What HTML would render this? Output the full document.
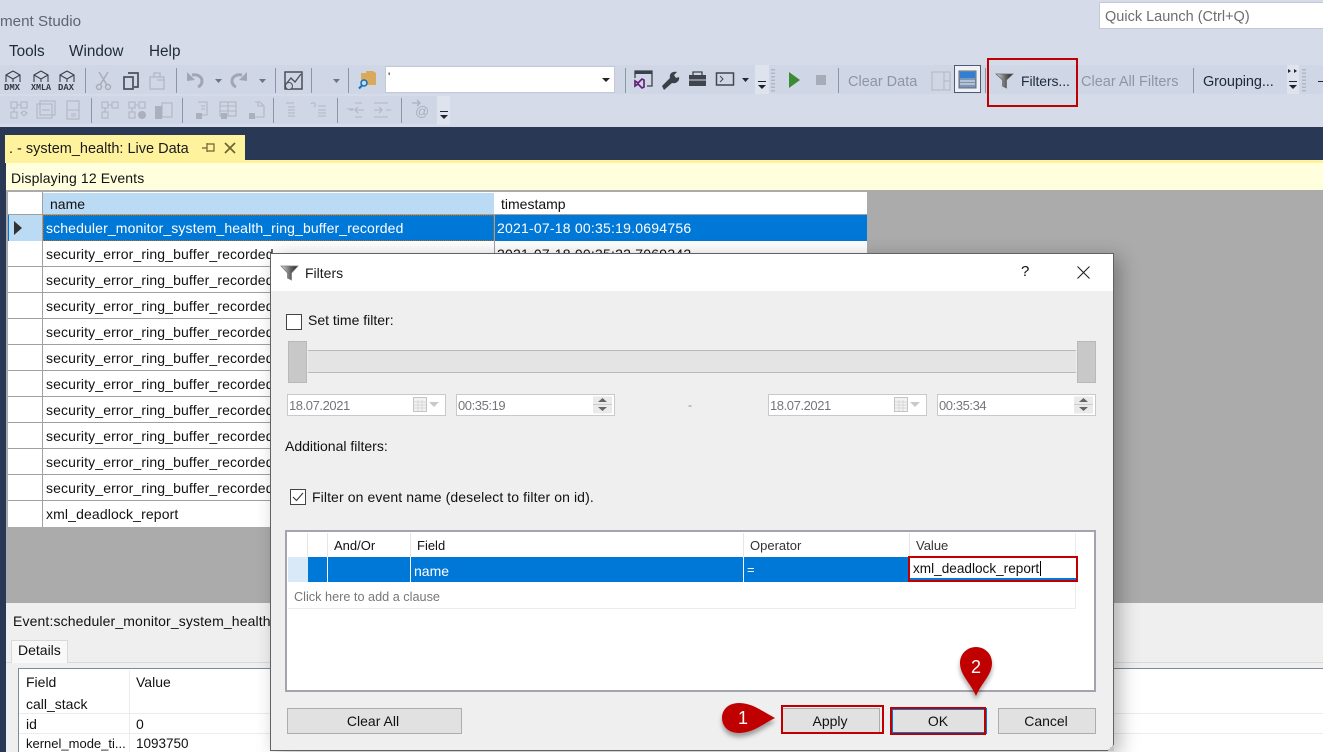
<!DOCTYPE html>
<html><head><meta charset="utf-8"><title>Filters</title>
<style>
html,body{margin:0;padding:0;width:1323px;height:752px;overflow:hidden;background:#293955}
body{position:relative;font-family:"Liberation Sans",sans-serif;font-size:14px;color:#111}
.a{position:absolute;box-sizing:border-box}
.t{position:absolute;white-space:nowrap;line-height:18px;height:18px}
.g{letter-spacing:.13px}
.row{position:absolute;box-sizing:border-box;left:8px;width:859px;height:26px;background:#fff;border-bottom:1px solid #a0a0a0}
.btn{position:absolute;box-sizing:border-box;background:#e1e1e1;border:1px solid #adadad;text-align:center;font-size:14px;line-height:24px;color:#111}
.inp{position:absolute;box-sizing:border-box;height:22px;background:#fff;border:1px solid #c9c9c9;color:#74767c;font-size:13px;letter-spacing:-.42px;line-height:21px;padding-left:1px}
.red{position:absolute;box-sizing:border-box;border:2px solid #c00000}
svg{position:absolute;overflow:visible}
</style></head><body>

<div class="a" style="left:0;top:0;width:1323px;height:127px;background:#d6dbe9"></div>
<div class="t" style="left:0;top:12px;font-size:15.200px;color:#5d6675;margin-top:1px">ment Studio</div>
<div class="a" style="left:1099px;top:2px;width:224px;height:27px;background:#fff;border:1px solid #c4c9d8;border-right:0"></div>
<div class="t" style="left:1105px;top:8px;font-size:14.500px;color:#6d6d6d">Quick Launch (Ctrl+Q)</div>
<div class="t" style="left:9px;top:43px;font-size:15.300px;color:#1e2a3a">Tools</div>
<div class="t" style="left:69px;top:43px;font-size:15.300px;color:#1e2a3a">Window</div>
<div class="t" style="left:149px;top:43px;font-size:15.300px;color:#1e2a3a">Help</div>

<div class="a" style="left:0;top:65px;width:1287px;height:29px;background:#cfd6e6"></div>
<div class="a" style="left:0;top:96px;width:437px;height:28px;background:#cfd6e6"></div>
<div class="a" style="left:437px;top:96px;width:13px;height:29px;background:#dfe3ee"></div>
<div class="a" style="left:755px;top:65px;width:14px;height:29px;background:#dfe3ee"></div>
<div class="a" style="left:1287px;top:65px;width:12px;height:29px;background:#dfe3ee"></div>
<div class="a" style="left:1299px;top:65px;width:24px;height:29px;background:#cfd6e6"></div>

<!-- combo -->
<div class="a" style="left:385px;top:66px;width:230px;height:27px;background:#fff;border:1px solid #c4c9d8"></div>
<div class="t" style="left:388px;top:68px;font-size:12px;color:#222">&#39;</div>

<svg style="left:0;top:0" width="1323" height="127" viewBox="0 0 1323 127" fill="none">
<!-- separators -->
<g stroke="#8c95a5" stroke-width="1">
<path d="M85.500 68v25M176.500 68v25M275.500 68v25M311.500 68v25M348.500 68v25M625.500 68v25M838.500 68v25M985.500 68v25M1193.500 68v25"/>
<path d="M91.500 98v25M182.500 98v25M273.500 98v25M337.500 98v25M401.500 98v25"/>
</g>
<!-- cube icons -->
<g stroke="#3a3f48" stroke-width="1.100">
<path d="M13 71l7 4v7M6 82v-7l7-4M6 75l7 4 7-4M13 79v3"/>
<path d="M41 71l7 4v7M34 82v-7l7-4M34 75l7 4 7-4M41 79v3"/>
<path d="M67 71l7 4v7M60 82v-7l7-4M60 75l7 4 7-4M67 79v3"/>
</g>
<g font-family="Liberation Mono,monospace" font-size="9" font-weight="bold" fill="#33373f">
<text x="4" y="90" textLength="16" lengthAdjust="spacingAndGlyphs">DMX</text><text x="31" y="90" textLength="20" lengthAdjust="spacingAndGlyphs">XMLA</text><text x="58" y="90" textLength="16" lengthAdjust="spacingAndGlyphs">DAX</text>
</g>
<!-- cut, copy, paste -->
<g stroke="#a7adb9" stroke-width="1.500"><path d="M99 72l8 13M108 72l-8 13"/><circle cx="99" cy="87" r="2.500"/><circle cx="108" cy="87" r="2.500"/></g>
<g stroke="#4b505a" stroke-width="1.700"><path d="M128 73h10v14h-4"/><rect x="124" y="77" width="9" height="12"/></g>
<g stroke="#b2b8c4" stroke-width="1.300"><rect x="150" y="77" width="14" height="12"/><path d="M154 77v-4h6v4M157 80h7"/></g>
<!-- undo / redo -->
<g stroke="#a0a6b2" stroke-width="3"><path d="M192 75c6-1 10 2 10 6 0 3-2 5-4 6"/><path d="M242 75c-6-1-10 2-10 6 0 3 2 5 4 6"/></g>
<path d="M187 72v9l8-1zM247 72v9l-8-1z" fill="#a0a6b2"/>
<g fill="#6f7683"><path d="M215 79h7l-3.500 4zM259 79h7l-3.500 4zM333 79h7l-3.500 4z"/></g>
<!-- chart -->
<rect x="285" y="72" width="17" height="17" stroke="#4a4f58" stroke-width="1.500"/><path d="M286 84l5-6 4 4 6-8" stroke="#4a4f58" stroke-width="1.300"/><circle cx="289" cy="86" r="3.500" fill="#cfd6e6" stroke="#4a4f58"/>
<!-- folder search -->
<path d="M361 73h5v-2h7l3 2v12h-15z" fill="#d9aa5c"/><circle cx="364" cy="83" r="3" fill="#cfd6e6" stroke="#0e70c0" stroke-width="1.500"/><path d="M362 85.500l-3 3" stroke="#0e70c0" stroke-width="2"/>
<path d="M602 78h8l-4 4z" fill="#222"/>
<!-- VS window -->
<path d="M635 78v-7h17v15h-5" stroke="#3c4149" stroke-width="1.300"/><rect x="634.500" y="71" width="17" height="3" fill="#3c4149"/>
<path d="M635 81l3 2 4-4 2 1v7l-2 1-4-4-3 2z" fill="none" stroke="#68217a" stroke-width="1.700"/>
<!-- wrench -->
<path d="M662 86l8-8c-1-4 2-7 7-6l-3 3 2 3 3-1c1 4-3 7-7 6l-8 7z" fill="#3a3f48"/>
<!-- toolbox -->
<rect x="689" y="75" width="17" height="11" fill="#3f444d"/><path d="M693 75v-3h9v3" stroke="#3f444d" stroke-width="1.300"/><path d="M689 80h17" stroke="#cfd6e6"/>
<!-- console -->
<rect x="716.500" y="73" width="17" height="12" stroke="#41464f" stroke-width="1.500"/><path d="M720 76l3 3-3 3" stroke="#41464f"/>
<path d="M742 78h7l-3.500 4z" fill="#1e2a3a"/>
<!-- overflow -->
<g fill="#20242c"><rect x="758" y="81" width="8" height="1"/><path d="M758 85h8l-4 4z"/><rect x="1289" y="81" width="8" height="1"/><path d="M1289 85h8l-4 4z"/><rect x="1318" y="81" width="5" height="1"/><rect x="440" y="111" width="8" height="1"/><path d="M440 115h8l-4 4z"/></g>
<path d="M1288 69l3 2-3 2zM1294 69l3 2-3 2z" fill="#20242c"/>
<!-- grips -->
<path d="M773 69v24M1304 69v24" stroke="#b0b6c4" stroke-width="4" stroke-dasharray="1.500 2"/>
<!-- play/stop -->
<path d="M789 72l11 8-11 8z" fill="#3b8a36"/><rect x="816" y="75" width="10" height="10" fill="#a6acb8"/>
<!-- layout icons -->
<g stroke="#b8bdc8" stroke-width="1.300"><rect x="932" y="72" width="18" height="18"/><path d="M944 72v18M944 81h6"/></g>
<rect x="954.500" y="65.500" width="26" height="27" fill="#f0f1f4" stroke="#4a5a78"/>
<rect x="959" y="71" width="17" height="17" fill="#7f95b4" stroke="#5a6a80"/><rect x="960" y="72" width="15" height="6" fill="#2f7fd4"/><path d="M960 81h15M960 84h15" stroke="#e8edf4"/>
<!-- second row -->
<g stroke="#b0b6c2" stroke-width="1.100">
<rect x="11" y="102" width="6" height="6"/><rect x="21" y="102" width="6" height="6"/><rect x="11" y="112" width="6" height="6"/><path d="M17 105h4M14 108v4M21 113l3 3 3-3-3-2z"/>
<rect x="37" y="104" width="15" height="14"/><rect x="40" y="101" width="15" height="14"/><path d="M42 110h8"/>
<rect x="67" y="101" width="12" height="18"/><path d="M67 110h12M71 114h5M71 116h5"/>
<rect x="102" y="102" width="6" height="6"/><rect x="112" y="102" width="6" height="6"/><rect x="102" y="112" width="6" height="6"/><path d="M108 105h4M105 108v4"/>
<rect x="129" y="102" width="6" height="6"/><rect x="139" y="102" width="6" height="6"/><rect x="129" y="112" width="6" height="6"/><path d="M135 105h4M132 108v4"/>
<rect x="162" y="103" width="10" height="14"/>
<path d="M198 102h9v13h-9M201 106h4M201 109h4"/>
<rect x="220" y="102" width="16" height="14"/><path d="M220 106h16M228 102v14M220 111h16"/>
<path d="M255 102h5l4 4v11h-14M258 102v4h5"/>
<path d="M286 103h8M288 107h7M288 110h7M288 113h7M288 116h7"/>
<path d="M318 106h8M318 110h8M318 113h8M318 116h8M311 104c3-3 6 0 3 3"/>
<path d="M347 109h7M362 103h-7M362 117h-7M356 110h8M350 110h3M358 107l-3 3 3 3"/>
<path d="M374 103h14M374 117h14M374 110h8M386 110h5M379 107l3 3-3 3"/>
</g>
<g fill="#aab0bc"><rect x="196" y="113" width="6" height="6"/><rect x="221" y="113" width="6" height="6"/><rect x="249" y="113" width="6" height="6"/><rect x="155" y="106" width="7" height="13"/><circle cx="142" cy="115" r="4"/></g>
<path d="M412 103h8M417 100l3 3-3 3" stroke="#aab0bc" stroke-width="1.300"/>
<text x="415" y="116" font-size="14" fill="#aab0bc" font-family="Liberation Sans,sans-serif">@</text>
<!-- filter funnel -->
<defs><linearGradient id="f" x1="0" x2="1"><stop offset="0" stop-color="#ddd"/><stop offset=".55" stop-color="#666"/><stop offset="1" stop-color="#222"/></linearGradient></defs>
<path d="M996 74h17l-6.500 6v8l-4-2v-6z" fill="url(#f)" stroke="#666" stroke-width=".7"/>
</svg>

<div class="t" style="left:848px;top:73px;font-size:14.500px;color:#8f96a3">Clear Data</div>
<div class="t" style="left:1021px;top:72px;font-size:14px;letter-spacing:-.1px;color:#1e2a3a">Filters...</div>
<div class="t" style="left:1081px;top:73px;font-size:14.500px;color:#8f96a3">Clear All Filters</div>
<div class="t" style="left:1203px;top:73px;font-size:14.500px;letter-spacing:-.1px;color:#1e2a3a">Grouping...</div>
<div class="red" style="left:987px;top:58px;width:91px;height:49px"></div>

<!-- Doc tab -->
<div class="a" style="left:5px;top:135px;width:240px;height:27px;background:#fff29d"></div>
<div class="t" style="left:9px;top:140px;font-size:14.500px;color:#1b1b1b">. - system_health: Live Data</div>
<svg style="left:200px;top:140px" width="45" height="16" fill="none" stroke="#6b6334" stroke-width="1.200"><path d="M2 8h5M7 4h7v7H7zM7 3v9"/><path d="M25 3l10 10M35 3L25 13" stroke-width="1.700"/></svg>

<div class="a" style="left:5px;top:160px;width:1318px;height:3px;background:#fff29d"></div>
<div class="a" style="left:6px;top:163px;width:1317px;height:27px;background:#ffffdd"></div>
<div class="t g" style="left:11px;top:169px">Displaying 12 Events</div>

<!-- Grid -->
<div class="a" style="left:6px;top:190px;width:1317px;height:413px;background:#ababab"></div>
<div class="a" style="left:8px;top:192px;width:859px;height:335px;background:#fff"></div>
<div class="a" style="left:43px;top:193px;width:451px;height:21px;background:#bbdaf3"></div>
<div class="a" style="left:8px;top:214px;width:859px;height:1px;background:#a0a0a0"></div>
<div class="t" style="left:50px;top:195px">name</div>
<div class="t" style="left:501px;top:195px">timestamp</div>

<div class="row" style="top:215px;background:#0078d7;border:0"></div>
<div class="a" style="left:9px;top:215px;width:33px;height:26px;background:#bbdaf3"></div>
<div class="a" style="left:43px;top:215px;width:451px;height:26px;border:1px dotted #c46a00"></div>
<svg style="left:13px;top:221px" width="10" height="14"><path d="M1 0l8 7-8 7z" fill="#333"/></svg>
<div class="t g" style="left:46px;top:219px;color:#fff">scheduler_monitor_system_health_ring_buffer_recorded</div>
<div class="t" style="left:497px;top:219px;color:#fff;letter-spacing:.22px">2021-07-18 00:35:19.0694756</div>

<div class="row" style="top:241px"></div><div class="t g" style="left:46px;top:245px">security_error_ring_buffer_recorded</div><div class="t" style="left:497px;top:245px;letter-spacing:.22px">2021-07-18 00:35:22.7069342</div>
<div class="row" style="top:267px"></div><div class="t g" style="left:46px;top:271px">security_error_ring_buffer_recorded</div>
<div class="row" style="top:293px"></div><div class="t g" style="left:46px;top:297px">security_error_ring_buffer_recorded</div>
<div class="row" style="top:319px"></div><div class="t g" style="left:46px;top:323px">security_error_ring_buffer_recorded</div>
<div class="row" style="top:345px"></div><div class="t g" style="left:46px;top:349px">security_error_ring_buffer_recorded</div>
<div class="row" style="top:371px"></div><div class="t g" style="left:46px;top:375px">security_error_ring_buffer_recorded</div>
<div class="row" style="top:397px"></div><div class="t g" style="left:46px;top:401px">security_error_ring_buffer_recorded</div>
<div class="row" style="top:423px"></div><div class="t g" style="left:46px;top:427px">security_error_ring_buffer_recorded</div>
<div class="row" style="top:449px"></div><div class="t g" style="left:46px;top:453px">security_error_ring_buffer_recorded</div>
<div class="row" style="top:475px"></div><div class="t g" style="left:46px;top:479px">security_error_ring_buffer_recorded</div>
<div class="row" style="top:501px;border:0"></div><div class="t g" style="left:46px;top:505px">xml_deadlock_report</div>
<div class="a" style="left:42px;top:192px;width:1px;height:335px;background:#a0a0a0"></div>
<div class="a" style="left:494px;top:215px;width:1px;height:52px;background:#a0a0a0"></div>

<!-- Bottom panel -->
<div class="a" style="left:6px;top:603px;width:1317px;height:149px;background:#efefef"></div>
<div class="t g" style="left:13px;top:612px">Event:scheduler_monitor_system_health_ring_buffer_recorded</div>
<div class="a" style="left:11px;top:640px;width:57px;height:23px;background:#f8f8f8;border:1px solid #d9d9d9;border-bottom:0;z-index:2"></div>
<div class="t" style="left:18px;top:641px;z-index:3">Details</div>
<div class="a" style="left:6px;top:662px;width:1317px;height:1px;background:#d9d9d9"></div>
<div class="a" style="left:18px;top:668px;width:1305px;height:84px;background:#fff;border:1px solid #7f8a96;border-width:1px 0 0 1px"></div>
<div class="a" style="left:19px;top:713px;width:1304px;height:1px;background:#ececec"></div>
<div class="a" style="left:19px;top:733px;width:1304px;height:1px;background:#ececec"></div>
<div class="a" style="left:129px;top:670px;width:1px;height:82px;background:#ececec"></div>
<div class="t" style="left:26px;top:673px">Field</div><div class="t" style="left:136px;top:673px">Value</div>
<div class="t" style="left:26px;top:695px">call_stack</div>
<div class="t" style="left:26px;top:715px">id</div><div class="t" style="left:136px;top:715px">0</div>
<div class="t" style="left:26px;top:735px;font-size:13px">kernel_mode_ti...</div><div class="t" style="left:136px;top:735px;font-size:13.500px">1093750</div>

<!-- Dialog -->
<div class="a" style="left:270px;top:253px;width:844px;height:498px;background:#efefef;border:1px solid #5f6368;box-shadow:6px 4px 18px rgba(0,0,0,.28)"></div>
<div class="a" style="left:271px;top:254px;width:842px;height:37px;background:#fff"></div>
<svg style="left:281px;top:265px" width="18" height="16"><path d="M0 1h17l-6.500 7v7l-4-2V8z" fill="url(#f)" stroke="#777" stroke-width=".7"/></svg>
<div class="t" style="left:305px;top:264px;color:#1b1b1b">Filters</div>
<div class="t" style="left:1021px;top:263px;font-size:15px;color:#111">?</div>
<svg style="left:1077px;top:266px" width="13" height="13"><path d="M.5.500l12 12M12.500.500l-12 12" stroke="#222" stroke-width="1.100"/></svg>

<div class="a" style="left:286px;top:314px;width:16px;height:16px;background:#fff;border:1px solid #444"></div>
<div class="t" style="left:308px;top:311px">Set time filter:</div>

<div class="a" style="left:308px;top:350px;width:768px;height:23px;background:#e4e4e4;border-top:1px solid #b9b9b9;border-bottom:1px solid #b9b9b9"></div>
<div class="a" style="left:288px;top:341px;width:19px;height:42px;background:#c8c8c8;border:1px solid #b9b9b9"></div>
<div class="a" style="left:1077px;top:341px;width:19px;height:42px;background:#c8c8c8;border:1px solid #b9b9b9"></div>

<div class="inp" style="left:287px;top:394px;width:159px">18.07.2021</div>
<div class="inp" style="left:456px;top:394px;width:159px">00:35:19</div>
<div class="inp" style="left:768px;top:394px;width:159px">18.07.2021</div>
<div class="inp" style="left:937px;top:394px;width:159px">00:35:34</div>
<div class="t" style="left:688px;top:396px;font-size:12px;color:#888">-</div>
<svg style="left:413px;top:397px" width="28" height="18" fill="none"><rect x=".5" y=".5" width="13" height="14" fill="#f2f2f2" stroke="#c4c4c4"/><path d="M1 5h12M1 8h12M1 11h12M5 3v11M9 3v11" stroke="#d8d8d8"/><path d="M16 5h10l-5 5z" fill="#c9c9c9"/></svg>
<svg style="left:894px;top:397px" width="28" height="18" fill="none"><rect x=".5" y=".5" width="13" height="14" fill="#f2f2f2" stroke="#c4c4c4"/><path d="M1 5h12M1 8h12M1 11h12M5 3v11M9 3v11" stroke="#d8d8d8"/><path d="M16 5h10l-5 5z" fill="#c9c9c9"/></svg>
<svg style="left:593px;top:396px" width="20" height="18"><rect width="19" height="17" y=".5" fill="#eaeaea"/><path d="M0 8.500h19" stroke="#ccc"/><path d="M5 6l4.500-4L14 6zM5 11l4.500 4 4.500-4z" fill="#666"/></svg>
<svg style="left:1074px;top:396px" width="20" height="18"><rect width="19" height="17" y=".5" fill="#eaeaea"/><path d="M0 8.500h19" stroke="#ccc"/><path d="M5 6l4.500-4L14 6zM5 11l4.500 4 4.500-4z" fill="#666"/></svg>

<div class="t" style="left:285px;top:437px">Additional filters:</div>
<div class="a" style="left:290px;top:489px;width:16px;height:16px;background:#fff;border:1px solid #444"></div>
<svg style="left:290px;top:489px" width="16" height="16"><path d="M3 8l3.500 3.500L13 4" fill="none" stroke="#333" stroke-width="1.100"/></svg>
<div class="t" style="left:312px;top:488px;letter-spacing:.1px">Filter on event name (deselect to filter on id).</div>

<!-- clause grid -->
<div class="a" style="left:285px;top:530px;width:811px;height:162px;background:#fff;border:2px solid #a3a5ae"></div>
<div class="a" style="left:288px;top:557px;width:20px;height:25px;background:#d9e9f7"></div>
<div class="a" style="left:308px;top:557px;width:602px;height:25px;background:#0078d7"></div>
<div class="a" style="left:307px;top:533px;width:1px;height:24px;background:#e6e6e6"></div>
<div class="a" style="left:327px;top:533px;width:1px;height:24px;background:#e6e6e6"></div>
<div class="a" style="left:410px;top:533px;width:1px;height:24px;background:#e6e6e6"></div>
<div class="a" style="left:743px;top:533px;width:1px;height:24px;background:#e6e6e6"></div>
<div class="a" style="left:909px;top:533px;width:1px;height:24px;background:#e6e6e6"></div>
<div class="a" style="left:1075px;top:533px;width:1px;height:76px;background:#ececec"></div>
<div class="a" style="left:327px;top:557px;width:1px;height:25px;background:#fff"></div>
<div class="a" style="left:410px;top:557px;width:1px;height:25px;background:#fff"></div>
<div class="a" style="left:743px;top:557px;width:1px;height:25px;background:#fff"></div>
<div class="a" style="left:288px;top:608px;width:788px;height:1px;background:#ececec"></div>
<div class="t" style="left:334px;top:537px;font-size:13px">And/Or</div>
<div class="t" style="left:417px;top:537px;font-size:13px">Field</div>
<div class="t" style="left:750px;top:537px;font-size:13px;color:#333">Operator</div>
<div class="t" style="left:916px;top:537px;font-size:13px;color:#333">Value</div>
<div class="t" style="left:414px;top:562px;color:#fff">name</div>
<div class="t" style="left:747px;top:561px;font-size:13px;color:#fff">=</div>
<div class="t" style="left:294px;top:588px;font-size:12.700px;color:#777">Click here to add a clause</div>
<div class="a" style="left:910px;top:557px;width:166px;height:23px;background:#fff;border-bottom:2px solid #0078d7"></div>
<div class="t" style="left:913px;top:560px;font-size:13.600px">xml_deadlock_report</div>
<div class="a" style="left:1040px;top:561px;width:1px;height:15px;background:#000"></div>
<div class="red" style="left:908px;top:556px;width:170px;height:26px"></div>

<!-- buttons -->
<div class="btn" style="left:287px;top:708px;width:175px;height:26px;padding-right:3px">Clear All</div>
<div class="btn" style="left:782px;top:708px;width:98px;height:26px;padding-right:2px">Apply</div>
<div class="btn" style="left:891px;top:708px;width:96px;height:26px;border:2px solid #0078d7;line-height:22px;padding-right:2px">OK</div>
<div class="btn" style="left:998px;top:708px;width:98px;height:26px;padding-right:2px">Cancel</div>
<div class="red" style="left:781px;top:705px;width:103px;height:29px"></div>
<div class="red" style="left:890px;top:707px;width:96px;height:28px"></div>
<svg style="left:1108px;top:745px" width="6" height="6"><path d="M4 0h2v2H4zM2 2h2v2H2zM4 2h2v2H4zM0 4h2v2H0zM2 4h2v2H2zM4 4h2v2H4z" fill="#c4c4c4"/></svg>

<!-- callouts -->
<svg style="left:715px;top:640px" width="290" height="105">
<defs><filter id="s" x="-30%" y="-30%" width="170%" height="170%"><feDropShadow dx="0" dy="4" stdDeviation="2.500" flood-color="#000" flood-opacity=".35"/></filter></defs>
<path d="M60 78C48 72 38 63 24 63 13 63 7 70 7 78s6 15 17 15c14 0 24-9 36-15z" fill="#c00000" filter="url(#s)"/>
<path d="M261 56c-6-14-16-21-16-33 0-9 7-16 16-16s16 7 16 16c0 12-10 19-16 33z" fill="#c00000" filter="url(#s)"/>
<text x="28" y="84" fill="#fff" font-size="18" text-anchor="middle" font-family="Liberation Sans,sans-serif">1</text>
<text x="261" y="33" fill="#fff" font-size="18" text-anchor="middle" font-family="Liberation Sans,sans-serif">2</text>
</svg>
</body></html>
